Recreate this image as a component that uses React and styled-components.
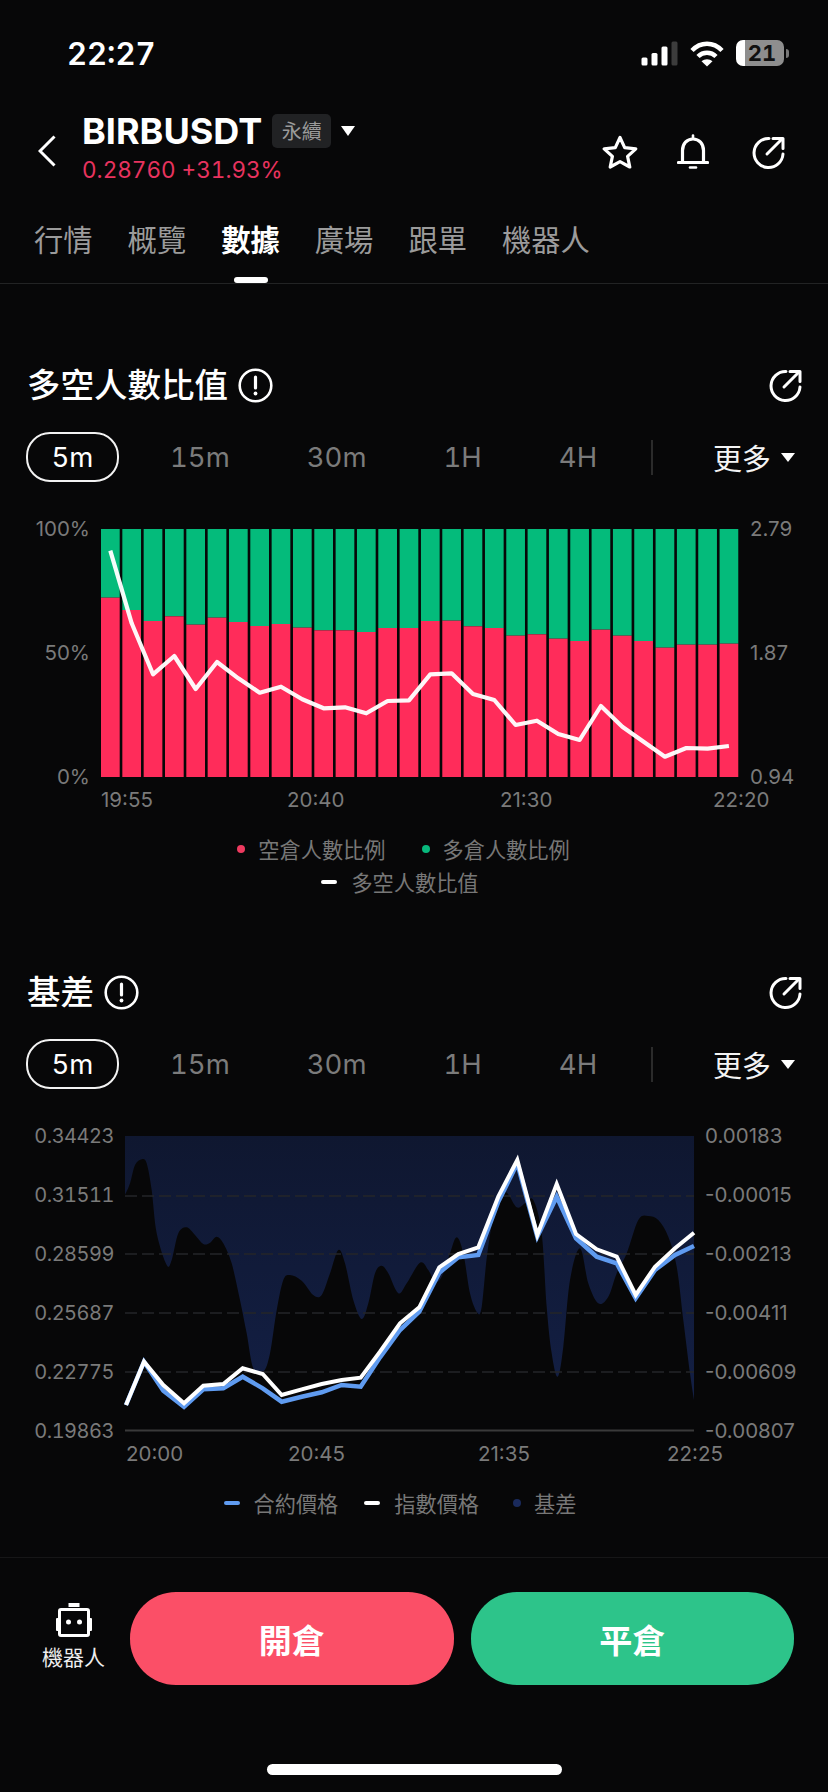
import React from "react";
import styled, { createGlobalStyle } from "styled-components";

const Global = createGlobalStyle`
  html, body { margin: 0; padding: 0; background: #070708; }
  * { box-sizing: border-box; }
`;

const FONT = `Inter, "Noto Sans CJK TC", "Noto Sans CJK SC", sans-serif`;

const Page = styled.div`
  width: 828px;
  height: 1792px;
  overflow: hidden;
  background: #070708;
  color: #fff;
  font-family: ${FONT};
  font-variant-numeric: tabular-nums;
`;

/* status bar */
const StatusBar = styled.div`
  height: 104px;
  display: flex;
  align-items: center;
  padding: 2px 44px 0 67px;
`;
const Clock = styled.div`
  font-size: 31px;
  font-weight: 600;
  flex: 1;
`;
const StatusIcons = styled.div`
  display: flex;
  align-items: center;
  gap: 12px;
`;
const Battery = styled.div`
  position: relative;
  width: 48px;
  height: 26px;
  border-radius: 7px;
  background: linear-gradient(90deg, #fff 0 9px, #8e8e8e 9px);
  color: #111;
  font-size: 22px;
  font-weight: 700;
  display: flex;
  align-items: center;
  justify-content: center;
  padding-left: 4px;
  &::after {
    content: "";
    position: absolute;
    right: -5px;
    top: 9px;
    width: 3px;
    height: 9px;
    border-radius: 0 3px 3px 0;
    background: #777;
  }
`;

/* header */
const Header = styled.div`
  height: 92px;
  display: flex;
  align-items: center;
  padding: 0 42px 4px 38px;
`;
const BackIcon = styled.svg`
  width: 18px;
  height: 32px;
  margin-right: 26px;
  margin-top: 6px;
`;
const SymbolBlock = styled.div`
  flex: 1;
  display: flex;
  flex-direction: column;
  gap: 7px;
`;
const SymbolRow = styled.div`
  display: flex;
  align-items: center;
  height: 36px;
`;
const SymbolName = styled.div`
  font-size: 36px;
  font-weight: 700;
  margin-right: 10px;
  font-variant-numeric: normal;
`;
const Tag = styled.div`
  width: 59px;
  height: 34px;
  border-radius: 5px;
  background: #212224;
  color: #9a9a9a;
  font-size: 20px;
  display: flex;
  align-items: center;
  justify-content: center;
  margin-right: 10px;
`;
const Caret = styled.span`
  display: inline-block;
  width: 0;
  height: 0;
  border-left: ${(p) => p.$size || 7.5}px solid transparent;
  border-right: ${(p) => p.$size || 7.5}px solid transparent;
  border-top: ${(p) => (p.$size || 7.5) * 1.35}px solid #fff;
`;
const Price = styled.div`
  font-size: 22.5px;
  line-height: 28px;
  color: #e8335f;
`;
const HeaderIcons = styled.div`
  display: flex;
  align-items: center;
  gap: 39px;
  margin-top: 8px;
  & > svg:last-child {
    margin-left: 4px;
  }
`;

/* tabs */
const Tabs = styled.div`
  height: 88px;
  display: flex;
  gap: 35px;
  padding: 0 34px;
  border-bottom: 1px solid #222324;
  align-items: flex-start;
`;
const Tab = styled.div`
  position: relative;
  height: 87px;
  line-height: 90px;
  font-size: 29.3px;
  font-weight: ${(p) => (p.$active ? 700 : 400)};
  color: ${(p) => (p.$active ? "#fff" : "#9b9b9b")};
  ${(p) =>
    p.$active &&
    `&::after {
      content: "";
      position: absolute;
      left: 13px;
      bottom: 0;
      width: 34px;
      height: 6px;
      border-radius: 3px;
      background: #fff;
    }`}
`;

/* section */
const Section = styled.section`
  padding-top: ${(p) => p.$top}px;
`;
const SectionHead = styled.div`
  height: 36px;
  display: flex;
  align-items: center;
  padding: 0 25px 0 27px;
`;
const SectionTitle = styled.h2`
  margin: 0 10px 0 0;
  font-size: 33.5px;
  line-height: 36px;
  font-weight: 500;
`;
const Spacer = styled.div`
  flex: 1;
`;

const FrameRow = styled.div`
  margin-top: 29px;
  height: 50px;
  display: flex;
  align-items: center;
  gap: 25px;
  padding: 0 33px 0 26px;
`;
const Frame = styled.div`
  height: 50px;
  min-width: ${(p) => (p.$active ? "93px" : "0")};
  padding: 0 ${(p) => (p.$active ? 0 : 26)}px;
  border: ${(p) => (p.$active ? "2px solid #f2f2f2" : "none")};
  border-radius: 24px;
  display: flex;
  align-items: center;
  justify-content: center;
  font-size: 27.5px;
  color: ${(p) => (p.$active ? "#fff" : "#7b7b7b")};
`;
const Sep = styled.div`
  width: 2px;
  height: 35px;
  background: #2b2b2b;
  margin-left: 3px;
`;
const More = styled.div`
  margin-left: auto;
  display: flex;
  align-items: center;
  gap: 10px;
  font-size: 29px;
  color: #f4f4f4;
`;

/* charts */
const ChartGrid = styled.div`
  margin-top: 47px;
  display: grid;
  grid-template-columns: ${(p) => p.$left}px ${(p) => p.$plot}px 1fr;
`;
const AxisCol = styled.div`
  display: flex;
  flex-direction: column;
  justify-content: space-between;
  margin: -12px 0;
  font-size: ${(p) => (p.$tight ? 20 : 20.5)}px;
  letter-spacing: ${(p) => (p.$tight ? "-0.5px" : "0")};
  font-variant-numeric: ${(p) => (p.$tight ? "tabular-nums" : "normal")};
  line-height: 24px;
  color: #7a7a7a;
  text-align: ${(p) => (p.$right ? "left" : "right")};
  padding: ${(p) => (p.$right ? "0 0 0 11px" : "0 11px 0 0")};
`;
const Plot = styled.svg`
  display: block;
  overflow: visible;
`;
const XAxis = styled.div`
  margin-top: 11px;
  padding-left: ${(p) => p.$left}px;
  display: grid;
  grid-template-columns: ${(p) => p.$cols};
  font-size: 20.5px;
  line-height: 24px;
  color: #7a7a7a;
  font-variant-numeric: normal;
`;
const Legend = styled.div`
  margin-top: 20px;
`;
const LegendRow = styled.div`
  height: 33px;
  display: flex;
  justify-content: center;
  align-items: center;
  gap: ${(p) => p.$gap || 36}px;
  padding-right: ${(p) => p.$shift}px;
`;
const LegendItem = styled.div`
  display: flex;
  align-items: center;
  gap: ${(p) => p.$gap || 14}px;
  margin-left: ${(p) => p.$push || 0}px;
  font-size: 21.2px;
  color: #777;
`;
const Dot = styled.span`
  width: 8px;
  height: 8px;
  border-radius: 50%;
  background: ${(p) => p.$color};
`;
const Dash = styled.span`
  width: 16px;
  height: 4px;
  border-radius: 2px;
  background: ${(p) => p.$color};
`;

/* footer */
const Footer = styled.div`
  margin-top: 38px;
  border-top: 1px solid #161617;
  padding: 34px 34px 0 42px;
  display: flex;
  align-items: flex-start;
  gap: 17px;
`;
const RobotEntry = styled.div`
  width: 63px;
  margin-right: 8px;
  display: flex;
  flex-direction: column;
  align-items: center;
  padding-top: 11px;
  gap: 7px;
  font-size: 21px;
  line-height: 26px;
  color: #eee;
  white-space: nowrap;
`;
const ActionButton = styled.div`
  flex: 1;
  height: 93px;
  border-radius: 46px;
  background: ${(p) => p.$color};
  display: flex;
  align-items: center;
  justify-content: center;
  font-size: 33px;
  font-weight: 700;
  color: #fff;
`;
const HomeBar = styled.div`
  width: 295px;
  height: 11px;
  border-radius: 6px;
  background: #fff;
  margin: 79px auto 0 267px;
`;

/* icons */
const ShareIcon = ({ size = 34 }) => (
  <svg width={size} height={size} viewBox="0 0 34 34" fill="none" stroke="#fff" strokeWidth="3" strokeLinecap="round" strokeLinejoin="round">
    <path d="M17 3.5A14.5 14.5 0 1 0 31 19" />
    <path d="M15 19 29.5 4.5" />
    <path d="M21 3.5h10v10" />
  </svg>
);
const InfoIcon = () => (
  <svg width="35" height="35" viewBox="0 0 35 35" fill="none" stroke="#fff">
    <circle cx="17.5" cy="17.5" r="15.8" strokeWidth="2.6" />
    <path d="M17.5 9v11" strokeWidth="3.2" strokeLinecap="round" />
    <circle cx="17.5" cy="25.5" r="1.9" fill="#fff" stroke="none" />
  </svg>
);
const StarIcon = () => (
  <svg width="36" height="34" viewBox="0 0 36 34" fill="none" stroke="#fff" strokeWidth="3.2" strokeLinejoin="round">
    <path d="M18 2.5 22.7 12.6 33.8 13.9 25.6 21.4 27.8 32 18 26.6 8.2 32 10.4 21.4 2.2 13.9 13.3 12.6Z" />
  </svg>
);
const BellIcon = () => (
  <svg width="32" height="36" viewBox="0 0 32 36" fill="none" stroke="#fff" strokeWidth="3.2" strokeLinecap="round" strokeLinejoin="round">
    <path d="M5.5 28V16.5C5.5 9.5 10 5 16 5s10.5 4.5 10.5 11.5V28" />
    <path d="M1.5 28.5h29" />
    <path d="M16 1.5V4" strokeWidth="2.6" />
    <path d="M13 33.5h6" strokeWidth="2.6" />
  </svg>
);
const SignalIcon = () => (
  <svg width="37" height="25" viewBox="0 0 37 25">
    <rect x="0.5" y="16.5" width="6" height="8" rx="1.5" fill="#fff" />
    <rect x="10.5" y="12" width="6" height="12.5" rx="1.5" fill="#fff" />
    <rect x="20.5" y="5.5" width="6" height="19" rx="1.5" fill="#fff" />
    <rect x="30.5" y="0.5" width="6" height="24" rx="1.5" fill="#3c3c3c" />
  </svg>
);
const WifiIcon = () => (
  <svg width="34" height="27" viewBox="0 0 34 27" fill="none" stroke="#fff" strokeWidth="4.5">
    <path d="M2 10.5C10.5 1.5 23.5 1.5 32 10.5" />
    <path d="M8 16.5C13 11.5 21 11.5 26 16.5" />
    <path d="M17 26.5 11.5 21.2C14.5 18.5 19.5 18.5 22.5 21.2Z" fill="#fff" stroke="none" />
  </svg>
);
const RobotIcon = () => (
  <svg width="36" height="35" viewBox="0 0 36 35" fill="none">
    <rect x="12.5" y="0" width="11" height="4" fill="#fff" />
    <rect x="3.5" y="6.5" width="29" height="26" rx="1.5" stroke="#fff" strokeWidth="3" />
    <rect x="0" y="15" width="3" height="13" rx="1" fill="#fff" />
    <rect x="33" y="15" width="3" height="13" rx="1" fill="#fff" />
    <circle cx="12.5" cy="19" r="2.5" fill="#fff" />
    <circle cx="23.5" cy="19" r="2.5" fill="#fff" />
  </svg>
);

/* data: first chart */
const redTops = [
  263, 300, 333, 319, 344, 323, 336, 348, 342, 353, 361, 361, 366, 354, 354,
  333, 332, 349, 354, 377, 373, 386, 393, 359, 377, 393, 413, 404, 404, 401,
];
const ratioLine = [
  122, 340, 493, 438, 537, 456, 505, 548, 530, 568, 595, 592, 610, 573, 571,
  493, 490, 552, 570, 645, 632, 672, 690, 588, 650, 695, 740, 714, 716, 708,
];
const BAR_STEP = 21.33;
const BAR_W = 18.7;
const PLOT1_H = 248;
const y1 = (z) => 510 + z / 3 - 529;

const RatioPlot = () => (
  <Plot width="638" height={PLOT1_H} viewBox={`0 0 638 ${PLOT1_H}`}>
    {redTops.map((t, i) => {
      const x = i * BAR_STEP;
      const top = y1(t);
      return (
        <g key={i}>
          <rect x={x} y="0" width={BAR_W} height={top} fill="#04bb7b" />
          <rect x={x} y={top} width={BAR_W} height={PLOT1_H - top} fill="#ff2c5a" />
        </g>
      );
    })}
    <polyline
      fill="none"
      stroke="#fff"
      strokeOpacity="0.96"
      strokeWidth="4.2"
      strokeLinejoin="round"
      points={ratioLine.map((v, i) => `${(i * BAR_STEP + BAR_W / 2).toFixed(1)},${y1(v).toFixed(1)}`).join(" ")}
    />
  </Plot>
);

/* data: second chart, traced in crop units */
const left = (x, y) => [110 + x / 3 - 125, 1120 + y / 3 - 1136];
const right = (x, y) => [400 + x / 3 - 125, 1120 + y / 3 - 1136];

const curve = [
  ...[
    [45, 225], [60, 190], [75, 135], [95, 118], [110, 130], [125, 210], [140, 340], [170, 435], [185, 420],
    [205, 340], [230, 322], [255, 345], [280, 372], [300, 368], [320, 350], [340, 370], [365, 430], [390, 540],
    [410, 640], [430, 745], [460, 755], [480, 700], [500, 570], [520, 480], [540, 465], [575, 482], [610, 525],
    [635, 525], [660, 460], [685, 390], [705, 430], [730, 540], [755, 597], [775, 550], [795, 460], [815, 437],
    [835, 460], [865, 520],
  ].map(([x, y]) => left(x, y)),
  ...[
    [20, 490], [60, 428], [85, 450], [105, 485], [125, 470], [150, 400], [170, 352], [190, 400], [210, 520], [232, 578],
    [245, 560], [262, 400], [285, 270], [315, 215], [350, 262], [375, 250], [400, 240], [425, 340], [440, 560],
    [455, 700], [473, 770], [490, 680], [510, 480], [540, 385], [565, 490], [595, 550], [625, 530], [650, 460],
    [680, 400], [715, 300], [745, 288], [775, 300], [805, 350], [830, 440], [850, 600], [870, 760], [882, 840],
  ].map(([x, y]) => right(x, y)),
];

const whiteLine = [
  ...[[48, 855], [102, 725], [160, 795], [222, 850], [280, 797], [340, 792], [398, 745], [458, 762], [515, 825], [575, 808], [635, 792], [695, 780], [752, 773], [810, 695]].map(([x, y]) => left(x, y)),
  ...[[0, 610], [58, 562], [118, 442], [175, 402], [235, 382], [295, 230], [352, 120], [412, 345], [470, 192], [528, 342], [590, 388], [650, 410], [707, 525], [765, 440], [825, 385], [882, 338]].map(([x, y]) => right(x, y)),
];
const blueLine = [
  ...[[48, 855], [102, 725], [160, 812], [222, 860], [280, 808], [340, 805], [398, 770], [458, 805], [515, 845], [575, 830], [635, 817], [695, 795], [752, 800], [810, 712]].map(([x, y]) => left(x, y)),
  ...[[0, 630], [58, 575], [118, 458], [175, 412], [235, 405], [295, 245], [352, 130], [412, 350], [470, 230], [528, 355], [590, 410], [650, 430], [707, 535], [765, 450], [825, 405], [882, 378]].map(([x, y]) => right(x, y)),
];

const smooth = (pts) => {
  let d = "";
  for (let i = 0; i < pts.length - 1; i++) {
    const p0 = pts[Math.max(i - 1, 0)];
    const p1 = pts[i];
    const p2 = pts[i + 1];
    const p3 = pts[Math.min(i + 2, pts.length - 1)];
    const c1 = [p1[0] + (p2[0] - p0[0]) / 6, p1[1] + (p2[1] - p0[1]) / 6];
    const c2 = [p2[0] - (p3[0] - p1[0]) / 6, p2[1] - (p3[1] - p1[1]) / 6];
    d += ` C${c1[0].toFixed(1)} ${c1[1].toFixed(1)} ${c2[0].toFixed(1)} ${c2[1].toFixed(1)} ${p2[0].toFixed(1)} ${p2[1].toFixed(1)}`;
  }
  return d;
};
const areaPath = `M0 0L569 0L${curve[curve.length - 1].map((n) => n.toFixed(1)).join(" ")}${smooth([...curve].reverse())}Z`;
const toPoints = (pts) => pts.map(([x, y]) => `${x.toFixed(1)},${y.toFixed(1)}`).join(" ");

const BasisPlot = () => (
  <Plot width="569" height="295" viewBox="0 0 569 295">
    <defs>
      <linearGradient id="basisFill" x1="0" y1="0" x2="0" y2="1">
        <stop offset="0" stopColor="#0f1730" />
        <stop offset="1" stopColor="#131f44" />
      </linearGradient>
    </defs>
    <path d={areaPath} fill="url(#basisFill)" />
    {[60, 118, 177, 236].map((y) => (
      <line key={y} x1="0" x2="569" y1={y} y2={y} stroke="#252628" strokeWidth="1.5" strokeDasharray="12 5" />
    ))}
    <line x1="0" x2="569" y1="294.5" y2="294.5" stroke="#3a3a3a" strokeWidth="2" />
    <polyline points={toPoints(blueLine)} fill="none" stroke="#5f9bf0" strokeWidth="4.5" strokeLinejoin="miter" />
    <polyline points={toPoints(whiteLine)} fill="none" stroke="#fff" strokeWidth="4" strokeLinejoin="miter" />
  </Plot>
);

const frames = ["5m", "15m", "30m", "1H", "4H"];
const TimeFrames = () => (
  <FrameRow>
    {frames.map((f, i) => (
      <Frame key={f} $active={i === 0}>{f}</Frame>
    ))}
    <Sep />
    <More>更多<Caret $size={7} /></More>
  </FrameRow>
);

const tabs = ["行情", "概覽", "數據", "廣場", "跟單", "機器人"];

export default function App() {
  return (
    <Page>
      <Global />
      <StatusBar>
        <Clock>22:27</Clock>
        <StatusIcons>
          <SignalIcon />
          <WifiIcon />
          <Battery>21</Battery>
        </StatusIcons>
      </StatusBar>

      <Header>
        <BackIcon viewBox="0 0 18 32" fill="none" stroke="#fff" strokeWidth="3">
          <path d="M16.5 1.5 2 16 16.5 30.5" />
        </BackIcon>
        <SymbolBlock>
          <SymbolRow>
            <SymbolName>BIRBUSDT</SymbolName>
            <Tag>永續</Tag>
            <Caret />
          </SymbolRow>
          <Price>0.28760 +31.93%</Price>
        </SymbolBlock>
        <HeaderIcons>
          <StarIcon />
          <BellIcon />
          <ShareIcon />
        </HeaderIcons>
      </Header>

      <Tabs>
        {tabs.map((t, i) => (
          <Tab key={t} $active={i === 2}>{t}</Tab>
        ))}
      </Tabs>

      <Section $top={83}>
        <SectionHead>
          <SectionTitle>多空人數比值</SectionTitle>
          <InfoIcon />
          <Spacer />
          <ShareIcon />
        </SectionHead>
        <TimeFrames />
        <ChartGrid $left={101} $plot={638}>
          <AxisCol>
            <div>100%</div>
            <div>50%</div>
            <div>0%</div>
          </AxisCol>
          <RatioPlot />
          <AxisCol $right>
            <div>2.79</div>
            <div>1.87</div>
            <div>0.94</div>
          </AxisCol>
        </ChartGrid>
        <XAxis $left={101} $cols="186px 213px 213px auto">
          <div>19:55</div>
          <div>20:40</div>
          <div>21:30</div>
          <div>22:20</div>
        </XAxis>
        <Legend>
          <LegendRow $shift={21}>
            <LegendItem $gap={13}><Dot $color="#ee3a5f" />空倉人數比例</LegendItem>
            <LegendItem $gap={13}><Dot $color="#08b87c" />多倉人數比例</LegendItem>
          </LegendRow>
          <LegendRow $shift={28}>
            <LegendItem><Dash $color="#fff" />多空人數比值</LegendItem>
          </LegendRow>
        </Legend>
      </Section>

      <Section $top={76}>
        <SectionHead>
          <SectionTitle>基差</SectionTitle>
          <InfoIcon />
          <Spacer />
          <ShareIcon />
        </SectionHead>
        <TimeFrames />
        <ChartGrid $left={125} $plot={569}>
          <AxisCol $tight>
            <div>0.34423</div>
            <div>0.31511</div>
            <div>0.28599</div>
            <div>0.25687</div>
            <div>0.22775</div>
            <div>0.19863</div>
          </AxisCol>
          <BasisPlot />
          <AxisCol $right>
            <div>0.00183</div>
            <div>-0.00015</div>
            <div>-0.00213</div>
            <div>-0.00411</div>
            <div>-0.00609</div>
            <div>-0.00807</div>
          </AxisCol>
        </ChartGrid>
        <XAxis $left={126} $cols="162px 190px 189px auto">
          <div>20:00</div>
          <div>20:45</div>
          <div>21:35</div>
          <div>22:25</div>
        </XAxis>
        <Legend>
          <LegendRow $shift={28} $gap={26}>
            <LegendItem><Dash $color="#5f9bf0" />合約價格</LegendItem>
            <LegendItem><Dash $color="#fff" />指數價格</LegendItem>
            <LegendItem $gap={13} $push={8}><Dot $color="#1a2a5c" />基差</LegendItem>
          </LegendRow>
        </Legend>
      </Section>

      <Footer>
        <RobotEntry>
          <RobotIcon />
          機器人
        </RobotEntry>
        <ActionButton $color="#fb4f67">開倉</ActionButton>
        <ActionButton $color="#2dc48a">平倉</ActionButton>
      </Footer>
      <HomeBar />
    </Page>
  );
}
